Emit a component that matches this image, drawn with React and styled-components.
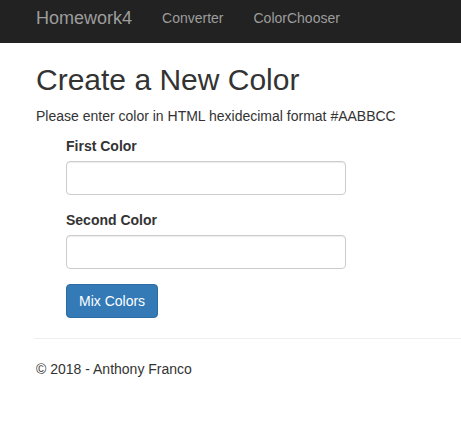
import React from 'react'
import styled, { createGlobalStyle } from 'styled-components'

const GlobalStyle = createGlobalStyle`
  body {
    margin: 0;
    background: #fff;
    font-family: "Liberation Sans", Arial, sans-serif;
    font-size: 14px;
    line-height: 20px;
    color: #333;
  }
`

const App = () => (
  <>
    <GlobalStyle />
    <Navbar>
      <Brand>Homework4</Brand>
      <NavLink>Converter</NavLink>
      <NavLink>ColorChooser</NavLink>
    </Navbar>
    <Container>
      <Title>Create a New Color</Title>
      <Text>Please enter color in HTML hexidecimal format #AABBCC</Text>
      <Form>
        <FormGroup>
          <Label>First Color</Label>
          <Input type="text" />
        </FormGroup>
        <FormGroup>
          <Label>Second Color</Label>
          <Input type="text" />
        </FormGroup>
        <Button type="button">Mix Colors</Button>
      </Form>
      <Divider />
      <Footer>© 2018 - Anthony Franco</Footer>
    </Container>
  </>
)

export default App

const Navbar = styled.nav`
  height: 43px;
  display: flex;
  align-items: flex-start;
  padding-left: 21px;
  background: #222;
  box-sizing: border-box;
`

const Brand = styled.a`
  padding: 8px 15px 0;
  font-size: 18px;
  line-height: 20px;
  color: #9d9d9d;
`

const NavLink = styled.a`
  padding: 8px 15px 0;
  font-size: 14px;
  line-height: 20px;
  color: #9d9d9d;
`

const Container = styled.main`
  padding-left: 36px;
`

const Title = styled.h2`
  margin: 20px 0 10px;
  font-size: 30px;
  font-weight: 500;
  line-height: 33px;
  color: #333;
`

const Text = styled.p`
  margin: 0 0 10px;
`

const Form = styled.form`
  padding-left: 30px;
  display: flex;
  flex-direction: column;
  align-items: flex-start;
`

const FormGroup = styled.div`
  display: flex;
  flex-direction: column;
  margin-bottom: 15px;
`

const Label = styled.label`
  margin-bottom: 5px;
  font-weight: bold;
`

const Input = styled.input`
  width: 280px;
  height: 34px;
  box-sizing: border-box;
  padding: 6px 12px;
  border: 1px solid #ccc;
  border-radius: 4px;
  font: inherit;
  box-shadow: inset 0 1px 1px rgba(0, 0, 0, 0.075);
`

const Button = styled.button`
  height: 34px;
  padding: 6px 12px;
  box-sizing: border-box;
  border: 1px solid #2e6da4;
  border-radius: 4px;
  background: #337ab7;
  color: #fff;
  font: inherit;
`

const Divider = styled.hr`
  margin: 20px 0 20px -2px;
  border: 0;
  border-top: 1px solid #eee;
`

const Footer = styled.p`
  margin: 0;
`
